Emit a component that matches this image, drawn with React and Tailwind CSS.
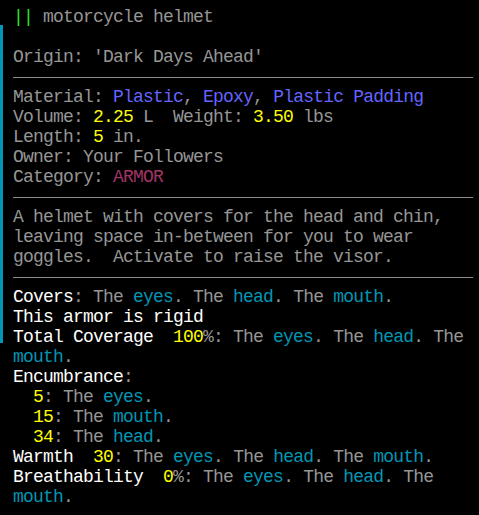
const gray = "text-[#969696]";
const cyan = "text-[#0096b4]";
const yellow = "text-[#ffff00]";
const white = "text-white";

function Row({ children }) {
  return <div className="h-[20px] leading-[20px] whitespace-pre">{children}</div>;
}

function Rule() {
  return (
    <div className="h-[20px] flex items-center">
      <div className="h-px w-[460px] bg-[#8c8c8c]" />
    </div>
  );
}

// "The eyes. The head. The mouth." style lists
function Parts({ items, cut }) {
  return (
    <>
      {items.map((p, i) => (
        <span key={i}>
          <span className={gray}>The </span>
          <span className={cyan}>{p}</span>
          {i < items.length - 1 && <span className={gray}>. </span>}
        </span>
      ))}
      {!cut && <span className={gray}>.</span>}
    </>
  );
}

export default function App() {
  return (
    <div
      className="relative w-[479px] h-[515px] bg-black overflow-hidden text-[18px] tracking-[-0.8px] text-[#969696]"
      style={{ fontFamily: '"Liberation Mono", "DejaVu Sans Mono", monospace' }}
    >
      {/* scroll indicator */}
      <div className="absolute left-0 top-[25px] w-[3px] h-[318px] bg-[#0096b4]" />

      <div className="pt-[7px] pl-[13px]">
        <Row>
          <span className="text-[#2ee62e]">||</span> motorcycle helmet
        </Row>
        <Row> </Row>
        <Row>Origin: 'Dark Days Ahead'</Row>
        <Rule />
        <Row>
          Material: <span className="text-[#6464ff]">Plastic</span>,{" "}
          <span className="text-[#6464ff]">Epoxy</span>,{" "}
          <span className="text-[#6464ff]">Plastic Padding</span>
        </Row>
        <Row>
          Volume: <span className={yellow}>2.25</span> L  Weight:{" "}
          <span className={yellow}>3.50</span> lbs
        </Row>
        <Row>
          Length: <span className={yellow}>5</span> in.
        </Row>
        <Row>Owner: Your Followers</Row>
        <Row>
          Category: <span className="text-[#a03464]">ARMOR</span>
        </Row>
        <Rule />
        <Row>A helmet with covers for the head and chin,</Row>
        <Row>leaving space in-between for you to wear</Row>
        <Row>goggles.  Activate to raise the visor.</Row>
        <Rule />
        <Row>
          <span className={white}>Covers</span>
          <span className={gray}>: </span>
          <Parts items={["eyes", "head", "mouth"]} />
        </Row>
        <Row>
          <span className={white}>This armor is rigid</span>
        </Row>
        <Row>
          <span className={white}>Total Coverage</span>  <span className={yellow}>100</span>
          <span className={gray}>%: </span>
          <Parts items={["eyes", "head", ""]} cut />
        </Row>
        <Row>
          <span className={cyan}>mouth</span>.
        </Row>
        <Row>
          <span className={white}>Encumbrance</span>:
        </Row>
        <Row>
          {"  "}<span className={yellow}>5</span>: <Parts items={["eyes"]} />
        </Row>
        <Row>
          {"  "}<span className={yellow}>15</span>: <Parts items={["mouth"]} />
        </Row>
        <Row>
          {"  "}<span className={yellow}>34</span>: <Parts items={["head"]} />
        </Row>
        <Row>
          <span className={white}>Warmth</span>  <span className={yellow}>30</span>:{" "}
          <Parts items={["eyes", "head", "mouth"]} />
        </Row>
        <Row>
          <span className={white}>Breathability</span>  <span className={yellow}>0</span>%:{" "}
          <Parts items={["eyes", "head", ""]} cut />
        </Row>
        <Row>
          <span className={cyan}>mouth</span>.
        </Row>
      </div>
    </div>
  );
}
